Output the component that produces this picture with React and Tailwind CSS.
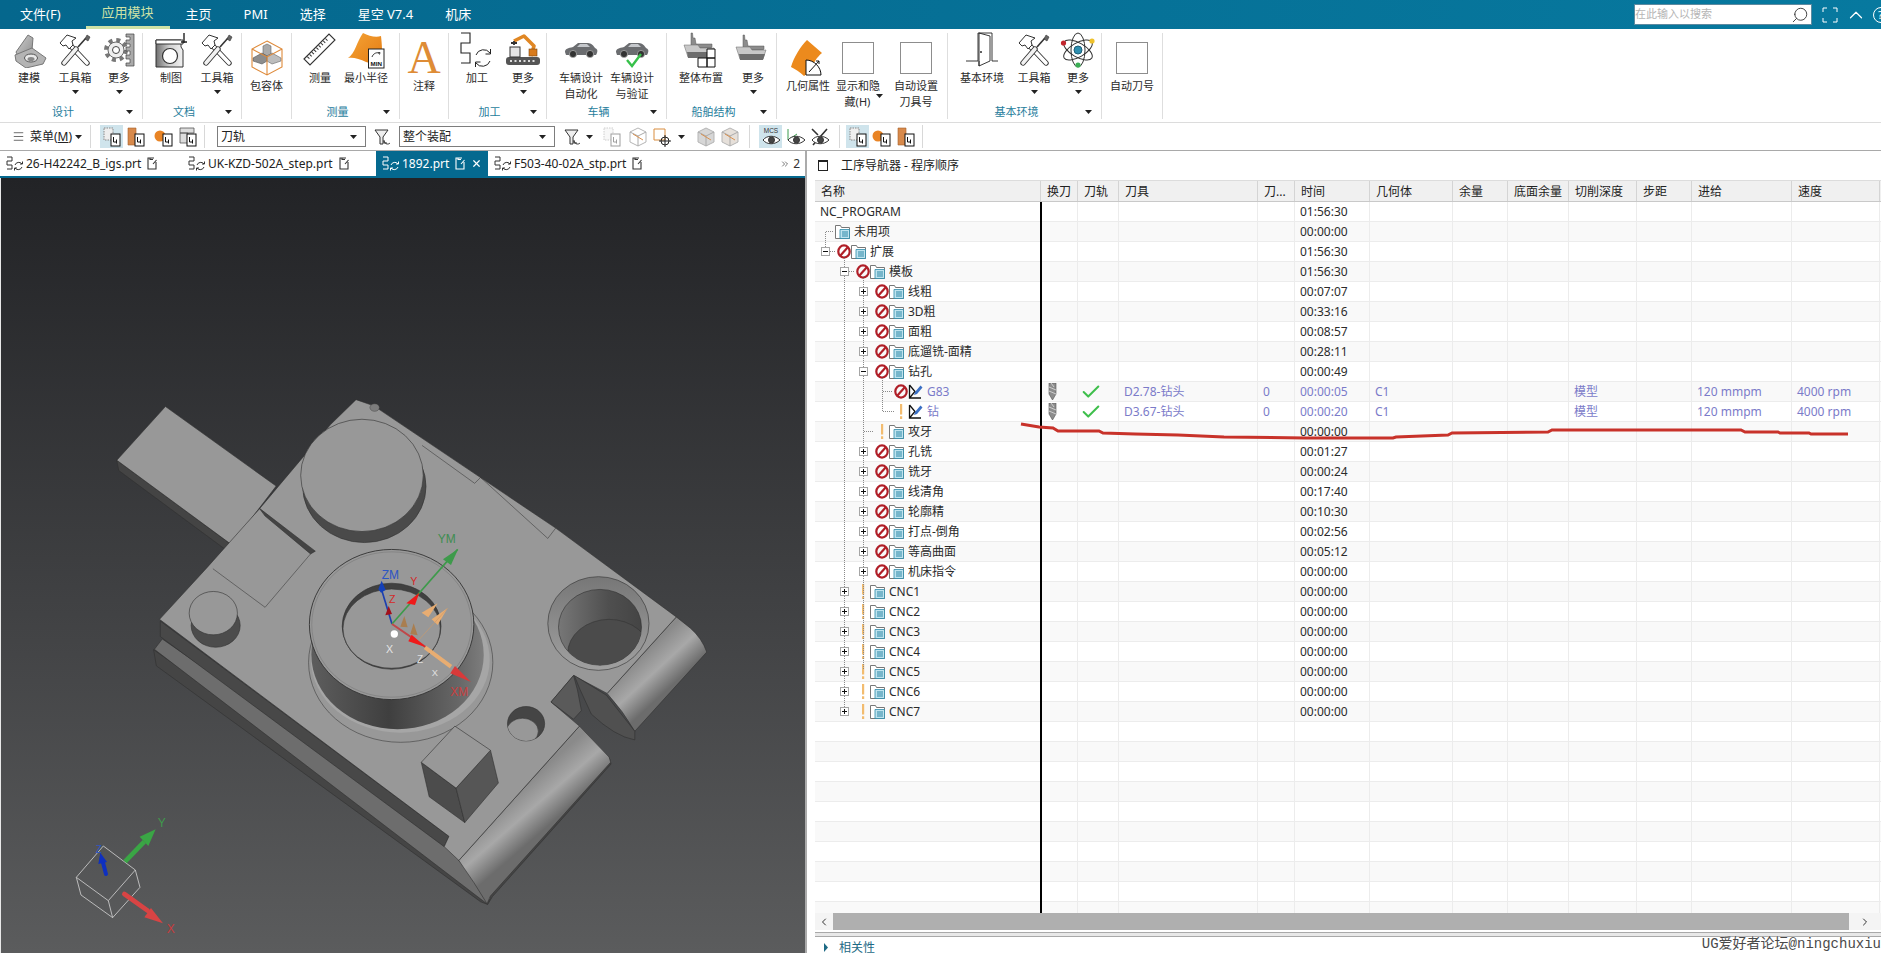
import React from "react";
import { Menu, Check, Search, X, ChevronUp, ChevronLeft, ChevronRight, ChevronsRight } from "lucide-react";

const Tri = ({ className = "" }) => (
  <svg width="7" height="4" viewBox="0 0 7 4" className={`shrink-0 ${className}`}><path d="M0 0h7L3.5 4z" fill="#222" /></svg>
);

const Sep = ({ className = "" }) => <div className={`w-px h-[23px] bg-[#d8d8d8] shrink-0 ${className}`} />;

/* ---------- ribbon icons ---------- */
const ModelIcon = () => (
  <svg width="36" height="36" viewBox="0 0 36 36">
    <defs><linearGradient id="mg" x1="0" y1="0" x2="1" y2="1"><stop offset="0" stopColor="#d0d0d0" /><stop offset="1" stopColor="#8a8a8a" /></linearGradient></defs>
    <path d="M5 20 17 3l5 3-1 12-12 10z" fill="url(#mg)" stroke="#777" />
    <path d="M4 23 21 16l14 10-3 6-17 4-10-7z" fill="#b4b4b4" stroke="#777" />
    <ellipse cx="20" cy="26" rx="6.5" ry="4" fill="#e8e8e8" stroke="#555" />
    <ellipse cx="20" cy="27" rx="3.5" ry="2" fill="#888" />
  </svg>
);
const ToolsIcon = () => (
  <svg width="36" height="36" viewBox="0 0 36 36" fill="none">
    <path d="M12 12 30 31" stroke="#333" strokeWidth="5.4" strokeLinecap="round" />
    <path d="M12 12 30 31" stroke="#fff" strokeWidth="3.6" strokeLinecap="round" />
    <path d="M19 17 7 31" stroke="#333" strokeWidth="5.4" strokeLinecap="round" />
    <path d="M19 17 7 31" stroke="#f2f2f2" strokeWidth="3.6" strokeLinecap="round" />
    <path d="M21 15 29 6" stroke="#333" strokeWidth="1.6" />
    <path d="M28 7l2-4 3 2-2 4z" fill="#666" stroke="#333" strokeWidth=".6" />
    <path d="M3 11 10 3l9 3-4 3 1 4-4 4-3-4-3 1z" fill="#fff" stroke="#333" strokeWidth="1" />
  </svg>
);
const GearIcon = () => (
  <svg width="36" height="36" viewBox="0 0 36 36" fill="none">
    <circle cx="15" cy="18" r="10" stroke="#777" strokeWidth="4" strokeDasharray="4 3.85" />
    <circle cx="15" cy="18" r="8" fill="#eee" stroke="#666" />
    <circle cx="15" cy="18" r="3.5" fill="#fff" stroke="#444" />
    <path d="M25 2h8v32h-8v-3h4v-4h-4v-4h4v-4h-4v-4h4v-3h-4V8h4V5h-4z" fill="#aaa" stroke="#444" strokeWidth=".7" />
  </svg>
);
const DraftIcon = () => (
  <svg width="36" height="36" viewBox="0 0 36 36">
    <defs><linearGradient id="dg" x1="0" y1="0" x2="1" y2="0"><stop offset="0" stopColor="#6f6f6f" /><stop offset=".5" stopColor="#d0d0d0" /><stop offset="1" stopColor="#f2f2f2" /></linearGradient></defs>
    <path d="M3 8h25v7l2 3v17H3z" fill="url(#dg)" stroke="#333" />
    <path d="M3 8h27v4H3z" fill="#fff" stroke="#333" />
    <circle cx="17" cy="24" r="7.5" fill="#fff" stroke="#333" strokeWidth="1.2" />
    <path d="M31 1v10M28 10h6" stroke="#222" strokeWidth="1.4" />
  </svg>
);
const BoxIcon = () => (
  <svg width="36" height="36" viewBox="0 0 36 36" fill="none">
    <path d="M14 6l4-2 4 2v8l-4 2-4-2z" fill="#aaa" stroke="#666" strokeWidth=".6" />
    <path d="M4 18l9-5 5 3v5l-5 3-9-3z" fill="#8d8d8d" stroke="#555" strokeWidth=".6" />
    <path d="M32 18l-9-5-5 3v5l5 3 9-3z" fill="#bdbdbd" stroke="#666" strokeWidth=".6" />
    <path d="M18 1 33 9v18l-15 8-15-8V9zM3 9l15 8 15-8M18 17v18" stroke="#de8a3a" strokeWidth="1.1" />
  </svg>
);
const RulerIcon = () => (
  <svg width="36" height="36" viewBox="0 0 36 36" fill="none">
    <path d="M2 27 27 2l6 6L8 33z" fill="#fff" stroke="#333" strokeWidth="1.1" />
    <path d="M6 26 26 6" stroke="#333" strokeWidth="3" strokeDasharray="1 2.2" />
  </svg>
);
const MinIcon = () => (
  <svg width="40" height="37" viewBox="0 0 40 37">
    <defs><linearGradient id="og" x1="0" y1="0" x2="1" y2="1"><stop offset="0" stopColor="#f5a436" /><stop offset="1" stopColor="#e37a12" /></linearGradient></defs>
    <path d="M2 26C9 22 11 9 17 1c6 3 13 5 18 3 1 9 2 19-1 30L20 30C14 27 7 25 2 26z" fill="url(#og)" />
    <rect x="22.5" y="17" width="15.5" height="19" fill="#fff" stroke="#222" />
    <path d="M26 25c1-3 4-5 7-4M32 21l2-.5-.5 2" fill="none" stroke="#222" strokeWidth=".9" />
    <text x="30.2" y="34" textAnchor="middle" fontSize="6.2" fontWeight="700" fontFamily="Liberation Sans" fill="#111">MIN</text>
  </svg>
);
const MachIcon = () => (
  <svg width="36" height="36" viewBox="0 0 36 36" fill="none" stroke="#222">
    <path d="M2 1h9v10H2v10h9v10H2" strokeWidth="1.1" />
    <path d="M17 23a8 8 0 0 1 14-2M31 29a8 8 0 0 1-14 2" strokeWidth="1" />
    <path d="M31.5 17v5h-5M16.5 35v-5h5" strokeWidth="1" />
  </svg>
);
const RobotIcon = () => (
  <svg width="36" height="36" viewBox="0 0 36 36" fill="none">
    <rect x="1" y="25" width="34" height="8" rx="3" fill="#555" />
    <path d="M5 29h26" stroke="#ddd" strokeWidth="2" strokeDasharray="2 2.5" />
    <rect x="5" y="15" width="10" height="10" fill="#e4e4e4" stroke="#333" />
    <path d="M26 24 29 14 19 4 9 9" stroke="#e08724" strokeWidth="3.6" strokeLinejoin="round" />
    <rect x="24" y="17" width="8" height="7" fill="#d97b1c" stroke="#7a4310" strokeWidth=".6" />
    <path d="M9 9v4M6 11h6" stroke="#333" strokeWidth="1.8" />
  </svg>
);
const Car = ({ check }) => (
  <svg width="36" height="36" viewBox="0 0 36 36">
    <path d="M2 20c0-3 3-4 8-5l5-4h10c3 0 6 3 7 5 2 1 3 2 2 5l-1 2H3z" fill="#6b6d70" />
    <path d="M14 15l3-3h7l3 3z" fill="#c5c8cc" />
    <circle cx="10" cy="22" r="3.6" fill="#333" stroke="#aaa" strokeWidth=".8" />
    <circle cx="27" cy="22" r="3.6" fill="#333" stroke="#aaa" strokeWidth=".8" />
    {check && <path d="M13 28l5 6 9-12" fill="none" stroke="#38c14b" strokeWidth="2.4" />}
  </svg>
);
const ShipShape = () => (
  <>
    <path d="M8 14V3h1.5l.5 5h2l1 6h16v3l-1 1H8z" fill="#8c8c8c" stroke="#555" strokeWidth=".5" />
    <path d="M1 15h14l2 3h14l-3 9H5z" fill="#c8c8c8" stroke="#666" strokeWidth=".5" />
    <path d="M4 22h26l-2 6H5z" fill="#6d6d6d" />
  </>
);
const ShipLayoutIcon = () => (
  <svg width="36" height="40" viewBox="0 0 36 40" fill="none">
    <ShipShape />
    <path d="M24 19h8v9h-8zM15 28h9v9h-9zM24 28h8v9h-8z" fill="#fff" stroke="#111" />
  </svg>
);
const ShipIcon = () => <svg width="36" height="36" viewBox="0 0 36 36" fill="none"><ShipShape /></svg>;
const GeoIcon = () => (
  <svg width="36" height="40" viewBox="0 0 36 40">
    <path d="M1 29C4 19 10 9 17 2l15 13c-5 4-9 10-11 18L14 38C10 34 5 31 1 29z" fill="#ec8a1d" />
    <path d="M16 37V22c8 0 15 7 15 15z" fill="#fff" stroke="#111" />
    <path d="M19 34 29 23M26 23h3v3" fill="none" stroke="#111" />
  </svg>
);
const EmptyBox = () => <div className="w-[32px] h-[32px] border border-[#8d8d8d]" />;
const DoorIcon = () => (
  <svg width="34" height="36" viewBox="0 0 34 36" fill="none" stroke="#222" strokeWidth=".9">
    <path d="M1 29h12V1h14v28h6M14 34 25 29V4L14 1zM14 29V34" />
    <circle cx="16" cy="20" r=".6" fill="#222" />
  </svg>
);
const AtomIcon = () => (
  <svg width="36" height="36" viewBox="0 0 36 36" fill="none" stroke="#333" strokeWidth="1">
    <ellipse cx="18" cy="18" rx="16" ry="7" transform="rotate(30 18 18)" />
    <ellipse cx="18" cy="18" rx="16" ry="7" transform="rotate(-30 18 18)" />
    <ellipse cx="18" cy="18" rx="7" ry="17" />
    <circle cx="18" cy="18" r="4" fill="#2f8fb0" stroke="#1d6079" />
    <circle cx="3.5" cy="11" r="2.6" fill="#c2262e" stroke="none" />
    <circle cx="32" cy="9" r="2.6" fill="#eec12b" stroke="none" />
    <circle cx="18" cy="33" r="2.6" fill="#3cae55" stroke="none" />
  </svg>
);

/* ---------- ribbon data ---------- */
const ribbon = [
  { w: "w-[143px]", pad: "pl-[6px]", label: "设计", menu: true, items: [
    { w: "w-[46px]", icon: <ModelIcon />, text: ["建模"] },
    { w: "w-[46px]", icon: <ToolsIcon />, text: ["工具箱"], drop: true },
    { w: "w-[42px]", icon: <GearIcon />, text: ["更多"], drop: true },
  ] },
  { w: "w-[99px]", pad: "pl-[5px]", label: "文档", menu: true, items: [
    { w: "w-[46px]", icon: <DraftIcon />, text: ["制图"] },
    { w: "w-[46px]", icon: <ToolsIcon />, text: ["工具箱"], drop: true },
  ] },
  { w: "w-[50px]", pad: "", items: [{ w: "w-[49px]", low: true, icon: <BoxIcon />, text: ["包容体"] }] },
  { w: "w-[108px]", pad: "pl-[5px]", label: "测量", menu: true, items: [
    { w: "w-[46px]", icon: <RulerIcon />, text: ["测量"] },
    { w: "w-[46px]", icon: <MinIcon />, text: ["最小半径"] },
  ] },
  { w: "w-[49px]", pad: "", items: [{ w: "w-[48px]", low: true, icon: <span className="font-['Liberation_Serif'] text-[46px] leading-[32px] text-[#de8c36]">A</span>, text: ["注释"] }] },
  { w: "w-[98px]", pad: "pl-[5px]", label: "加工", menu: true, items: [
    { w: "w-[46px]", icon: <MachIcon />, text: ["加工"] },
    { w: "w-[46px]", icon: <RobotIcon />, text: ["更多"], drop: true },
  ] },
  { w: "w-[120px]", pad: "pl-[8px]", label: "车辆", menu: true, items: [
    { w: "w-[52px]", icon: <Car />, text: ["车辆设计", "自动化"] },
    { w: "w-[50px]", icon: <Car check />, text: ["车辆设计", "与验证"] },
  ] },
  { w: "w-[110px]", pad: "pl-[8px] gap-[3px]", label: "船舶结构", menu: true, items: [
    { w: "w-[52px]", icon: <ShipLayoutIcon />, text: ["整体布置"] },
    { w: "w-[46px]", icon: <ShipIcon />, text: ["更多"], drop: true },
  ] },
  { w: "w-[171px]", pad: "pl-[7px]", items: [
    { w: "w-[48px]", low: true, icon: <GeoIcon />, text: ["几何属性"] },
    { w: "w-[52px]", low: true, icon: <EmptyBox />, text: ["显示和隐", "藏(H)"], inlineDrop: true },
    { w: "w-[64px]", low: true, icon: <EmptyBox />, text: ["自动设置", "刀具号"] },
  ] },
  { w: "w-[154px]", pad: "pl-[6px]", label: "基本环境", menu: true, items: [
    { w: "w-[56px]", icon: <DoorIcon />, text: ["基本环境"] },
    { w: "w-[48px]", icon: <ToolsIcon />, text: ["工具箱"], drop: true },
    { w: "w-[40px]", icon: <AtomIcon />, text: ["更多"], drop: true },
  ] },
  { w: "w-[61px]", pad: "", items: [{ w: "w-[60px]", low: true, icon: <EmptyBox />, text: ["自动刀号"] }] },
];

const RibbonItem = ({ item }) => (
  <div className={`${item.w} shrink-0 flex flex-col items-center`}>
    <div className={`flex items-center justify-center ${item.low ? "mt-[9px] h-[32px]" : "h-[34px]"}`}>{item.icon}</div>
    <div className={`${item.low ? "mt-[4px]" : "mt-[3px]"} text-[11px] leading-[16px] text-center whitespace-nowrap text-[#2a2a2a]`}>
      {item.text.map((t, i) => (
        <div key={i} className={item.inlineDrop && i === 1 ? "flex items-center justify-center gap-[6px] pl-[12px]" : ""}>
          {t}{item.inlineDrop && i === 1 && <Tri className="mb-[12px]" />}
        </div>
      ))}
    </div>
    {item.drop && <Tri className="mt-[4px]" />}
  </div>
);

const Ribbon = () => (
  <div className="h-[94px] shrink-0 flex items-start pt-[4px] bg-white border-b border-[#dcdcdc]">
    {ribbon.map((g, i) => (
      <div key={i} className={`${g.w} h-[86px] shrink-0 border-r border-[#dedede] flex flex-col`}>
        <div className={`h-[74px] flex ${g.pad || "justify-center"}`}>
          {g.items.map((it, j) => <RibbonItem key={j} item={it} />)}
        </div>
        {g.label && (
          <div className="h-[14px] flex items-center">
            <div className="flex-1 text-center text-[11px] leading-[14px] text-[#1f7d9c]">{g.label}</div>
            <div className="w-[16px]">{g.menu && <Tri />}</div>
          </div>
        )}
      </div>
    ))}
  </div>
);

/* ---------- small toolbar icons ---------- */
const Mini = ({ kind = "plain" }) => (
  <svg width="20" height="20" viewBox="0 0 20 20" fill="none">
    {kind === "plain" && <path d="M2 1h9v12H2z" fill="#eee" stroke="#888" strokeDasharray="1.5 1" />}
    {kind === "hatch" && <path d="M2 1h8v17H2z" fill="#d88a4c" stroke="#a55e28" strokeWidth=".6" />}
    {kind === "ball" && <circle cx="6" cy="9" r="5.5" fill="#e98425" />}
    {kind === "crown" && <path d="M2 1h14v5H2zM2 6h8v10H2z" fill="#ddd" stroke="#555" strokeWidth=".8" />}
    <rect x="9" y="7" width="9" height="12" fill="#fff" stroke="#111" />
    <path d="M11.5 10v5h3M14.5 12.5v4" stroke="#111" strokeWidth="1" />
  </svg>
);
const TbBtn = ({ on, className = "", children }) => (
  <div className={`h-[23px] flex items-center justify-center shrink-0 ${on ? "bg-[#cfe4ec]" : ""} ${className}`}>{children}</div>
);
const FilterIcon = ({ faded }) => (
  <svg width="20" height="20" viewBox="0 0 20 20" fill="none" stroke={faded ? "#aaa" : "#333"}>
    <path d="M2 3h13L10 10v7H7v-7z" fill="#eee" />
    <path d="M11 14c1 3 4 4 6 2M11 13v3h3" />
  </svg>
);
const Cube = ({ tone }) => (
  <svg width="18" height="20" viewBox="0 0 18 20">
    <path d="M9 1 17 5v10l-8 4-8-4V5z" fill={tone} stroke="#b5b5b5" />
    <path d="M1 5l8 4 8-4M9 9v10" fill="none" stroke="#aaa" />
    <path d="M4 7l10 6" stroke="#d9914f" />
  </svg>
);
const EyeIcon = ({ kind }) => (
  <svg width="22" height="22" viewBox="0 0 22 22" fill="none" stroke="#333">
    {kind === "mcs" && <text x="11" y="7" textAnchor="middle" fontSize="6.5" fontFamily="Liberation Sans" fill="#333" stroke="none">MCS</text>}
    {kind === "axis" && <path d="M3 14V3M3 14l9-6" stroke="#3b9c4d" />}
    {kind === "slash" && <path d="M4 19 18 3M3 3l6 6" strokeWidth="1.6" />}
    <path d="M3 14c4-5 12-5 17 0-5 5-13 5-17 0z" fill="#fff" />
    <circle cx="11.5" cy="14" r="3" fill="#444" />
  </svg>
);

const Select = ({ w, text }) => (
  <div className={`${w} h-[21px] shrink-0 border border-[#7d7d7d] flex items-center pl-[3px] pr-[8px] justify-between text-[12px]`}>
    <span>{text}</span><Tri />
  </div>
);

const Toolbar = () => (
  <div className="h-[28px] shrink-0 flex items-center bg-white border-b border-[#a9a9a9] text-[#222]">
    <Menu size={13} strokeWidth={1.2} className="ml-[12px] shrink-0" />
    <span className="ml-[5px] text-[12px] leading-none w-[42px] whitespace-nowrap">菜单(<span className="underline">M</span>)</span>
    <Tri className="ml-[3px]" />
    <Sep className="ml-[8px]" />
    <TbBtn on className="ml-[9px] w-[23px]"><Mini /></TbBtn>
    <TbBtn className="w-[26px]"><Mini kind="hatch" /></TbBtn>
    <TbBtn className="ml-[2px] w-[26px]"><Mini kind="ball" /></TbBtn>
    <TbBtn className="w-[22px]"><Mini kind="crown" /></TbBtn>
    <Sep className="ml-[5px]" />
    <Select w="w-[149px] ml-[12px]" text="刀轨" />
    <TbBtn className="ml-[6px] w-[22px]"><FilterIcon /></TbBtn>
    <Select w="w-[156px] ml-[5px]" text="整个装配" />
    <TbBtn className="ml-[7px] w-[22px]"><FilterIcon /></TbBtn>
    <Tri className="ml-[2px]" />
    <TbBtn className="ml-[8px] w-[22px] opacity-40"><Mini /></TbBtn>
    <TbBtn className="ml-[3px] w-[24px]"><Cube tone="#fff" /></TbBtn>
    <TbBtn className="w-[24px]"><svg width="20" height="20" viewBox="0 0 20 20" fill="none"><path d="M2 2h11v11H2z" stroke="#d98d3f" /><circle cx="13" cy="14" r="4" stroke="#222" /><path d="M13 8v12M7 14h12" stroke="#222" /></svg></TbBtn>
    <Tri className="ml-[4px]" />
    <TbBtn className="ml-[9px] w-[24px]"><Cube tone="#d6d6d6" /></TbBtn>
    <TbBtn className="w-[24px]"><Cube tone="#e6e0da" /></TbBtn>
    <Sep className="ml-[7px]" />
    <TbBtn on className="ml-[9px] w-[23px]"><EyeIcon kind="mcs" /></TbBtn>
    <TbBtn className="ml-[2px] w-[24px]"><EyeIcon kind="axis" /></TbBtn>
    <TbBtn className="w-[24px]"><EyeIcon kind="slash" /></TbBtn>
    <Sep className="ml-[7px]" />
    <TbBtn on className="ml-[6px] w-[23px]"><Mini /></TbBtn>
    <TbBtn className="ml-[1px] w-[24px]"><Mini kind="ball" /></TbBtn>
    <TbBtn className="w-[24px]"><Mini kind="hatch" /></TbBtn>
    <Sep className="ml-[4px]" />
  </div>
);

/* ---------- file tabs ---------- */
const FileSync = ({ color = "#333" }) => (
  <svg width="18" height="16" viewBox="0 0 18 16" fill="none" stroke={color} className="shrink-0">
    <path d="M1 1h5v4H1v4h5v4H1" />
    <path d="M9 9a4 4 0 0 1 7-1M16 11a4 4 0 0 1-7 1M16.5 5.5V8h-2.5M8.5 14.5V12H11" />
  </svg>
);
const DocEdit = ({ color = "#333" }) => (
  <svg width="10" height="13" viewBox="0 0 10 13" fill="none" stroke={color} className="shrink-0 ml-[6px]">
    <path d="M7 1H1v11h8V5M3 1v1.5h3M6 7l3.5-4" strokeWidth="1.1" />
  </svg>
);
const Tab = ({ name, className, active }) => (
  <div className={`h-[25px] flex items-center shrink-0 text-[12px] pl-[6px] ${active ? "bg-[#05698f] text-white" : "text-[#222]"} ${className}`}>
    <FileSync color={active ? "#fff" : "#333"} />
    <span className="ml-[2px] whitespace-nowrap">{name}</span>
    <DocEdit color={active ? "#fff" : "#333"} />
    {active && <X size={11} strokeWidth={2.6} className="ml-[6px]" />}
  </div>
);

const TabBar = () => (
  <div className="h-[27px] shrink-0 flex border-b-2 border-[#05698f] bg-white">
    <Tab name="26-H42242_B_igs.prt" className="w-[182px]" />
    <Tab name="UK-KZD-502A_step.prt" className="w-[194px]" />
    <Tab active name="1892.prt" className="w-[112px]" />
    <Tab name="F503-40-02A_stp.prt" className="w-[160px]" />
    <div className="ml-auto mr-[5px] h-[25px] flex items-center gap-[3px] text-[12px] text-[#333]">
      <ChevronsRight size={10} strokeWidth={1.6} /> 2
    </div>
  </div>
);

/* ---------- 3D view ---------- */
const Part = () => (
  <svg className="absolute inset-0" width="805" height="775" viewBox="0 178 805 775">
    <defs>
      <linearGradient id="fil1" gradientUnits="userSpaceOnUse" x1="1040" y1="1205" x2="1130" y2="1295">
        <stop offset="0" stopColor="#8a8a8a" /><stop offset=".5" stopColor="#a8a8a8" /><stop offset="1" stopColor="#6c6c6c" />
      </linearGradient>
      <linearGradient id="fil2" gradientUnits="userSpaceOnUse" x1="1365" y1="800" x2="1450" y2="880">
        <stop offset="0" stopColor="#8a8a8a" /><stop offset=".5" stopColor="#a8a8a8" /><stop offset="1" stopColor="#6c6c6c" />
      </linearGradient>
      <linearGradient id="cone" x1="0" y1="0" x2="1" y2="0">
        <stop offset="0" stopColor="#5d5d5d" /><stop offset=".45" stopColor="#3f3f3f" /><stop offset=".85" stopColor="#666" /><stop offset="1" stopColor="#7d7d7d" />
      </linearGradient>
      <linearGradient id="wall" x1="0" y1="0" x2="1" y2="0">
        <stop offset="0" stopColor="#777" /><stop offset=".6" stopColor="#4f4f4f" /><stop offset="1" stopColor="#444" />
      </linearGradient>
      <linearGradient id="rim" x1="0" y1="0" x2="0" y2="1">
        <stop offset="0" stopColor="#777" /><stop offset="1" stopColor="#a0a0a0" />
      </linearGradient>
      <clipPath id="holeClip"><ellipse cx="1262" cy="718" rx="105" ry="110" /></clipPath>
      <clipPath id="smallClip"><ellipse cx="1075" cy="998" rx="47" ry="50" /></clipPath>
    </defs>

    <g transform="translate(100 380) scale(0.3954 0.3444)" stroke="#303030" strokeWidth="1.6" strokeLinejoin="round">
      {/* tab on the left */}
      <path d="M40 233l5 30 273 232 12-17z" fill="#444" />
      <path d="M163 77 443 308 330 478 40 233z" fill="#989898" />

      {/* base side and ledge */}
      <path d="M133 783l7 47 820 685 18 8 12-23 300-385-5-20-385 305z" fill="#454545" />
      <path d="M135 782l20-30 730 583 20 60 80 110-10 15z" fill="#6d6d6d" />
      <path d="M150 745V700L880 1325l-12 30z" fill="#484848" />

      {/* fillets */}
      <path d="M905 1395 1210 1005l75 90 4 15-304 388q-10 25-8 24Q945 1460 905 1395z" fill="url(#fil1)" />
      <path d="M1280 910 1455 688l35 32q30 30 42 70L1350 1020Q1320 960 1280 910z" fill="url(#fil2)" />

      {/* main top face */}
      <path d="M645 57 690 75 1150 430 1455 688 1280 910 1195 858 1138 935 1210 1005 905 1395 868 1355 880 1325 148 695 268 545 400 375 580 130z" fill="#989898" />

      {/* notch */}
      <path d="M1195 858 1138 935 1195 985 1215 960 1205 900z" fill="#5a5a5a" />
      <path d="M1197 858 1278 915 1350 1020v25q-50-10-110-75l-28-70z" fill="#505050" />

      {/* step by the tab */}
      <path d="M400 372 542 497 530 505 415 395z" fill="#444" />
      <path d="M283 548 415 660 530 505M812 190 945 300 960 283 1130 460 1150 430" fill="none" strokeWidth="1.4" />
      <ellipse cx="692" cy="80" rx="12" ry="11" fill="#7c7c7c" strokeWidth="1" />

      {/* big boss */}
      <ellipse cx="666" cy="309" rx="156" ry="163" fill="#4a4a4a" />
      <ellipse cx="660" cy="277" rx="155" ry="163" fill="#989898" />

      {/* small boss */}
      <ellipse cx="290" cy="713" rx="62" ry="63" fill="#4c4c4c" />
      <ellipse cx="284" cy="677" rx="61" ry="63" fill="#989898" />

      {/* central stepped boss */}
      <ellipse cx="758" cy="820" rx="233" ry="232" fill="#989898" strokeWidth="1.4" />
      <ellipse cx="757" cy="812" rx="226" ry="212" fill="#a6a6a6" stroke="none" />
      <ellipse cx="750" cy="798" rx="218" ry="216" fill="url(#cone)" stroke="none" />
      <ellipse cx="735" cy="710" rx="208" ry="218" fill="#989898" strokeWidth="2.4" />
      <ellipse cx="735" cy="710" rx="202" ry="211" fill="none" strokeWidth="1" stroke="#666" />
      <ellipse cx="735" cy="715" rx="125" ry="125" fill="#404040" />
      <ellipse cx="735" cy="722" rx="123" ry="115" fill="#989898" />

      {/* counterbored hole */}
      <ellipse cx="1258" cy="707" rx="128" ry="136" fill="url(#rim)" />
      <ellipse cx="1262" cy="718" rx="105" ry="110" fill="url(#wall)" />
      <g clipPath="url(#holeClip)"><ellipse cx="1285" cy="795" rx="105" ry="100" fill="#4b4b4b" strokeWidth="1.4" /></g>

      {/* small hole */}
      <ellipse cx="1075" cy="998" rx="47" ry="50" fill="#454545" />
      <g clipPath="url(#smallClip)"><ellipse cx="1066" cy="1020" rx="40" ry="38" fill="#989898" strokeWidth="1.4" /></g>

      {/* block */}
      <path d="M810 1110 898 1185 920 1285 830 1210z" fill="#4c4c4c" />
      <path d="M898 1185 985 1075 1005 1170 920 1285z" fill="#565656" />
      <path d="M810 1110 895 1005 985 1075 898 1185z" fill="#989898" />
    </g>

    {/* work coordinate triad */}
    <g transform="translate(290 510) scale(0.3333)" fontFamily="Liberation Sans" fontSize="36">
      <path d="M303 342 272 240" stroke="#1c3fb0" strokeWidth="5" />
      <path d="M272 212 284 240 270 248 262 238z" fill="#1440b8" />
      <path d="M293 288 303 312 283 316z" fill="#a3101a" />
      <path d="M303 342 500 118" stroke="#3e9a4b" strokeWidth="5" />
      <path d="M502 116 480 165 456 148z" fill="#3e9a4b" />
      <path d="M385 248 372 285 346 280z" fill="#ef1a1a" />
      <path d="M470 294 440 345 422 328z" fill="#e8ad72" />
      <path d="M440 280 412 322 392 308z" fill="#e8ad72" />
      <path d="M340 318 350 352 328 350zM368 340 380 376 358 372z" fill="#a97e50" />
      <path d="M385 388 470 295" stroke="#c89a6d" strokeWidth="2" />
      <path d="M303 342 410 415" stroke="#c0474a" strokeWidth="6" />
      <path d="M405 412 352 394 362 374z" fill="#ef1a1a" />
      <path d="M402 412 480 470" stroke="#e8ad72" strokeWidth="12" />
      <path d="M540 516 478 490 492 468z" fill="#d83a3a" />
      <circle cx="310" cy="372" r="11" fill="#fff" />
      <text x="440" y="100" fill="#3f8d50">YM</text>
      <text x="272" y="208" fill="#2d55c4">ZM</text>
      <text x="358" y="224" fill="#d42a2a" fontSize="32">Y</text>
      <text x="294" y="280" fill="#d42a2a" fontSize="32">Z</text>
      <text x="285" y="430" fill="#e4e4e4" fontSize="32">X</text>
      <text x="478" y="557" fill="#c93f3f">XM</text>
      <text x="422" y="498" fill="#e0e0e0" fontSize="28">X</text>
      <text x="378" y="458" fill="#e0e0e0" fontSize="30">Z</text>
    </g>

    {/* view triad */}
    <g transform="translate(0 780) scale(0.3333)" fontFamily="Liberation Sans" fontSize="36" fill="none">
      <path d="M307 198 403 270 322 362 226 292zM226 292 240 345 335 413 322 362M335 413 417 322 403 270" stroke="#cfcfcf" strokeWidth="2.5" />
      <path d="M372 245 430 185" stroke="#3aa645" strokeWidth="14" />
      <path d="M464 148 442 198 416 170z" fill="#3aa645" />
      <path d="M370 342 440 392" stroke="#d84444" strokeWidth="14" strokeLinecap="round" />
      <path d="M486 430 430 412 450 384z" fill="#d84444" />
      <path d="M315 282 304 240" stroke="#0e30c0" strokeWidth="12" strokeLinecap="round" />
      <path d="M298 218 318 246 292 252z" fill="#0e30c0" />
      <text x="470" y="142" fill="#3f9a4c" stroke="none">Y</text>
      <text x="497" y="458" fill="#c83c3c" stroke="none">X</text>
      <text x="284" y="218" fill="#2d55c4" stroke="none" fontSize="30">Z</text>
    </g>
  </svg>
);

/* ---------- operation navigator ---------- */
const cols = ["", "换刀", "刀轨", "刀具", "刀...", "时间", "几何体", "余量", "底面余量", "切削深度", "步距", "进给", "速度"];
const grid = "grid grid-cols-[226px_37px_41px_139px_37px_75px_83px_55px_61px_68px_55px_100px_88px]";

const levelPad = ["pl-[6px]", "pl-[25px]", "pl-[44px]", "pl-[63px]"];

const rows = [
  { name: "NC_PROGRAM", time: "01:56:30", root: true },
  { name: "未用项", time: "00:00:00", bare: true },
  { name: "扩展", time: "01:56:30", lv: 0, exp: "-", st: "no" },
  { name: "模板", time: "01:56:30", lv: 1, exp: "-", st: "no" },
  { name: "线粗", time: "00:07:07", lv: 2, exp: "+", st: "no" },
  { name: "3D粗", time: "00:33:16", lv: 2, exp: "+", st: "no" },
  { name: "面粗", time: "00:08:57", lv: 2, exp: "+", st: "no" },
  { name: "底遛铣-面精", time: "00:28:11", lv: 2, exp: "+", st: "no" },
  { name: "钻孔", time: "00:00:49", lv: 2, exp: "-", st: "no" },
  { name: "G83", time: "00:00:05", lv: 3, st: "no", op: true, tool: "D2.78-钻头" },
  { name: "钻", time: "00:00:20", lv: 3, st: "warn", op: true, tool: "D3.67-钻头" },
  { name: "攻牙", time: "00:00:00", lv: 2, st: "warn" },
  { name: "孔铣", time: "00:01:27", lv: 2, exp: "+", st: "no" },
  { name: "铣牙", time: "00:00:24", lv: 2, exp: "+", st: "no" },
  { name: "线清角", time: "00:17:40", lv: 2, exp: "+", st: "no" },
  { name: "轮廓精", time: "00:10:30", lv: 2, exp: "+", st: "no" },
  { name: "打点-倒角", time: "00:02:56", lv: 2, exp: "+", st: "no" },
  { name: "等高曲面", time: "00:05:12", lv: 2, exp: "+", st: "no" },
  { name: "机床指令", time: "00:00:00", lv: 2, exp: "+", st: "no" },
  ...[1, 2, 3, 4, 5, 6, 7].map((n) => ({ name: `CNC${n}`, time: "00:00:00", lv: 1, exp: "+", st: "warn" })),
  ...Array.from({ length: 10 }, () => ({ blank: true })),
];

const Expander = ({ sign }) => (
  <svg width="9" height="9" viewBox="0 0 9 9" className="relative z-10 bg-white">
    <rect x=".5" y=".5" width="8" height="8" fill="#fff" stroke="#a5a5a5" />
    <path d={sign === "+" ? "M2 4.5h5M4.5 2v5" : "M2 4.5h5"} stroke="#111" />
  </svg>
);
const NoSign = () => (
  <svg width="14" height="15" viewBox="0 0 14 15" fill="none" stroke="#b01f28" strokeWidth="2.2">
    <ellipse cx="7" cy="7.5" rx="5.7" ry="6.1" /><path d="M3 12 11 3" />
  </svg>
);
const Warn = () => (
  <svg width="14" height="15" viewBox="0 0 14 15"><path d="M6 0h2.2v10.5H6zM6 12.3h2.2V15H6z" fill="#f2bc70" /></svg>
);
const Folder = () => (
  <svg width="15" height="15" viewBox="0 0 15 15" fill="none" className="shrink-0">
    <path d="M.5 14.5V1.5h5l1 2h8v11z" fill="#fff" stroke="#777" />
    <path d="M5 5.5h9.5v9H5z" fill="#bfe3ee" stroke="#2c8aa8" strokeWidth=".8" />
    <path d="M7 8h6M7 10h6M7 12h6" stroke="#1e7f9f" strokeWidth=".9" />
  </svg>
);
const OpIcon = () => (
  <svg width="15" height="15" viewBox="0 0 15 15" fill="none" className="shrink-0">
    <path d="M1.5 1V14H13M1.5 1 7 7.5 1.5 14" stroke="#111" strokeWidth="1.3" />
    <path d="M7 8 12.5 1.5l2 2L9 10l-3 1z" fill="#3a6fc4" />
  </svg>
);
const DrillIcon = () => (
  <svg width="9" height="17" viewBox="0 0 9 17">
    <path d="M1 0h7v11l-3.5 6L1 11z" fill="#8d8d8d" stroke="#555" strokeWidth=".6" />
    <path d="M1 4l7 3M1 8l7 3M3 0l3 4" stroke="#d5d5d5" strokeWidth=".9" />
  </svg>
);

const Cell = ({ children, color = "", className = "pl-[5px]" }) => (
  <div className={`h-full border-r border-[#ececec] flex items-center whitespace-nowrap overflow-hidden ${color} ${className}`}>{children}</div>
);

const NameCell = ({ r }) => {
  if (r.blank) return <div />;
  if (r.root) return <div className="pl-[5px] flex items-center">{r.name}</div>;
  if (r.bare) return <div className="pl-[20px] flex items-center"><Folder /><span className="ml-[4px]">{r.name}</span></div>;
  return (
    <div className={`${levelPad[r.lv]} flex items-center min-w-0`}>
      <div className="w-[9px] h-[9px] shrink-0 flex">{r.exp && <Expander sign={r.exp} />}</div>
      <div className="ml-[7px] w-[14px] shrink-0 flex">{r.st === "no" ? <NoSign /> : <Warn />}</div>
      {r.op ? <OpIcon /> : <Folder />}
      <span className={`ml-[4px] whitespace-nowrap ${r.op ? "text-[#7b7bc9]" : ""}`}>{r.name}</span>
    </div>
  );
};

const Row = ({ r, i }) => {
  const blue = r.op ? "text-[#7b7bc9]" : "";
  return (
    <div className={`${grid} h-[20px] border-b border-[#ececec] ${i % 2 ? "bg-[#f9f9f9]" : "bg-white"}`}>
      <NameCell r={r} />
      <Cell className="pl-[7px]">{r.op && <DrillIcon />}</Cell>
      <Cell className="pl-[2px]">{r.op && <Check size={22} strokeWidth={2.2} className="text-[#3fbf4c]" />}</Cell>
      <Cell color={blue}>{r.tool}</Cell>
      <Cell color={blue}>{r.op && "0"}</Cell>
      <Cell color={blue}>{r.time}</Cell>
      <Cell color={blue}>{r.op && "C1"}</Cell>
      <Cell />
      <Cell />
      <Cell color={blue}>{r.op && "模型"}</Cell>
      <Cell />
      <Cell color={blue}>{r.op && "120 mmpm"}</Cell>
      <Cell color={blue}>{r.op && "4000 rpm"}</Cell>
    </div>
  );
};

// dotted tree connectors, drawn over the name column
const TreeLines = () => (
  <svg className="absolute left-0 top-0 pointer-events-none" width="226" height="711" viewBox="816 202 226 711" fill="none" stroke="#8a8a8a" strokeDasharray="1 1" shapeRendering="crispEdges">
    <path d="M826.5 232V248M826.5 231.5H835" />
    <path d="M845.5 256V712" />
    <path d="M864.5 276V670" />
    <path d="M883.5 376V412M883.5 391.5H893M883.5 411.5H895M864.5 431.5H874" />
    <path d="M831 251.5H837M850 271.5H856" />
  </svg>
);

const redLine = "1021,424 1039,427 1053,428 1058,431 1099,431 1103,433 1135,434 1178,435 1224,437 1306,438 1393,438 1396,437 1448,435 1452,433 1548,432 1552,430 1741,430 1745,432 1778,432 1780,433 1809,433 1811,434 1848,434";

const Navigator = () => (
  <div className="flex-1 min-w-0 pl-[8px] relative">
    <div className="h-[29px] flex items-center">
      <div className="w-[10px] h-[11px] ml-[3px] border border-[#222] border-t-2 shrink-0" />
      <span className="ml-[13px] text-[12px] text-[#222]">工序导航器 - 程序顺序</span>
    </div>
    <div className="w-[1066px] border-t border-[#dcdcdc]">
      <div className={`${grid} h-[21px] bg-[#f0f0f0] border-b border-[#c9c9c9] text-[12px] text-[#222]`}>
        {cols.map((c, i) => (
          <div key={i} className="h-full border-r border-[#d4d4d4] pl-[6px] pt-[1px] flex items-center whitespace-nowrap">{i === 0 ? "名称" : c}</div>
        ))}
      </div>
      <div className="relative h-[711px] overflow-hidden text-[12px] text-[#2b2b2b]">
        {rows.map((r, i) => <Row key={i} r={r} i={i} />)}
        <TreeLines />
        <div className="absolute left-[225px] top-0 bottom-0 w-[1.5px] bg-black" />
      </div>
      <div className="h-[17px] flex items-center bg-[#f4f4f4] text-[#333]">
        <div className="w-[18px] flex justify-center"><ChevronLeft size={12} strokeWidth={2} /></div>
        <div className="w-[1016px] h-full bg-[#afafaf]" />
        <div className="flex-1 flex justify-center"><ChevronRight size={12} strokeWidth={2} /></div>
      </div>
    </div>
    <div className="mt-[2px] h-[5px] bg-[#e8e8e8] border-y border-[#a9a9a9]" />
    <div className="h-[22px] flex items-center pl-[8px] pb-[1px] text-[12px] text-[#1d6a85]">
      <svg width="6" height="9" viewBox="0 0 6 9"><path d="M1 0l4 4.5L1 9z" fill="#1d6a85" /></svg>
      <span className="ml-[10px] mt-[1px]">相关性</span>
    </div>
  </div>
);

const App = () => (
  <div className="w-[1881px] h-[953px] overflow-hidden relative flex flex-col bg-white text-[#222] [font-family:'Noto_Sans','Noto_Sans_CJK_SC',sans-serif]">
    {/* title bar */}
    <div className="h-[29px] shrink-0 flex items-stretch bg-linear-to-r from-[#05678d] to-[#07799f] text-[13px] text-white">
      <div className="pl-[4px] flex">
        <div className="px-[16px] flex items-center">文件(F)</div>
        <div className="ml-[9px] px-[16px] flex items-center text-[#cfe2a6] border-b-[3px] border-[#cfe2a6]">应用模块</div>
        <div className="px-[16px] flex items-center">主页</div>
        <div className="px-[16px] flex items-center">PMI</div>
        <div className="px-[16px] flex items-center">选择</div>
        <div className="px-[16px] flex items-center">星空 V7.4</div>
        <div className="px-[16px] flex items-center">机床</div>
      </div>
      <div className="ml-auto flex items-center">
        <div className="w-[178px] h-[21px] bg-white border border-[#5d8aa0] flex items-center justify-between pr-[2px] text-[11px] text-[#b5b5b5]">
          在此输入以搜索
          <Search size={18} strokeWidth={1.2} className="text-[#333] -scale-x-100" />
        </div>
        <svg width="16" height="16" viewBox="0 0 16 16" fill="none" stroke="#fff" className="ml-[10px]"><path d="M1 5V1h4M11 1h4v4M15 11v4h-4M5 15H1v-4" /></svg>
        <ChevronUp size={22} strokeWidth={1.3} className="ml-[7px]" />
        <div className="ml-[6px] w-[16px] h-[16px] rounded-full border border-white text-[11px] leading-[14px] pl-[4px] shrink-0 -mr-[8px]">?</div>
      </div>
    </div>

    <Ribbon />
    <Toolbar />

    <div className="flex-1 min-h-0 flex">
      <div className="w-[807px] shrink-0 flex flex-col border-r-2 border-[#ababab]">
        <TabBar />
        <div className="flex-1 relative border-l border-[#e8e8e8] bg-linear-to-b from-[#222326] to-[#5b5c5d] overflow-hidden">
          <Part />
        </div>
      </div>
      <Navigator />
    </div>

    {/* hand-drawn mark on the screenshot */}
    <svg className="absolute left-0 top-0 pointer-events-none" width="1881" height="953" fill="none">
      <polyline points={redLine} stroke="#c8322a" strokeWidth="3" />
    </svg>
    <div className="absolute right-0 bottom-0 text-[14px] leading-[17px] text-[#4a4a4a] whitespace-nowrap [font-family:'Liberation_Mono','Noto_Sans_CJK_SC',monospace] [text-shadow:0_0_2px_#fff]">UG爱好者论坛@ningchuxiu</div>
  </div>
);

export default App;
